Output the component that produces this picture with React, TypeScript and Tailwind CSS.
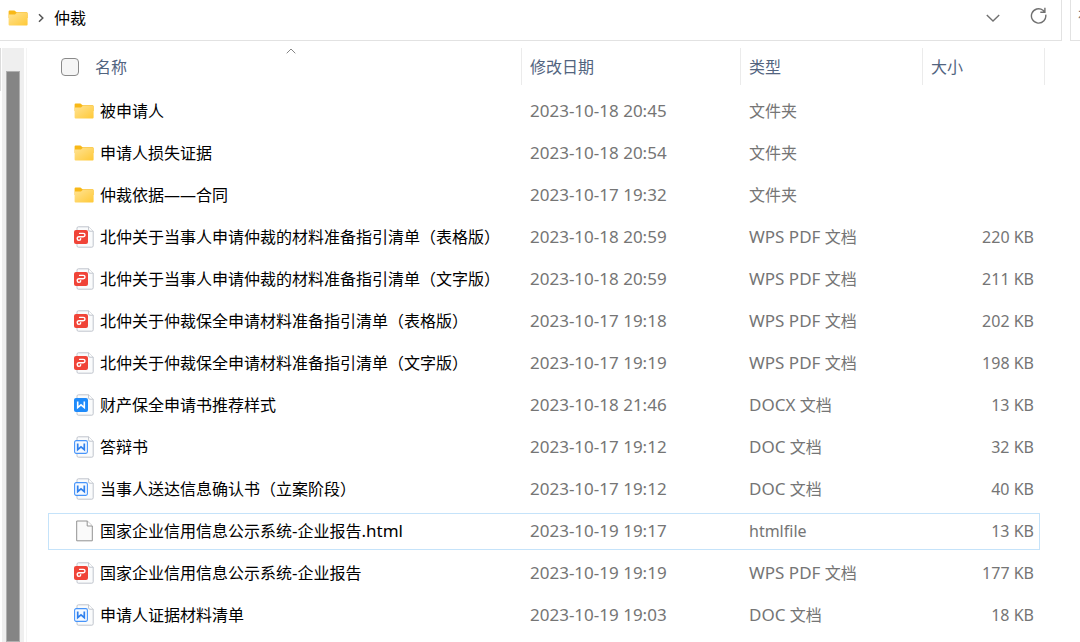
import React from "react";

type Kind = "folder" | "pdf" | "docx" | "doc" | "blank";

interface Entry {
  name: string;
  modified: string;
  type: string;
  size?: string;
  kind: Kind;
  selected?: boolean;
}

const entries: Entry[] = [
  { name: "被申请人", modified: "2023-10-18 20:45", type: "文件夹", kind: "folder" },
  { name: "申请人损失证据", modified: "2023-10-18 20:54", type: "文件夹", kind: "folder" },
  { name: "仲裁依据——合同", modified: "2023-10-17 19:32", type: "文件夹", kind: "folder" },
  { name: "北仲关于当事人申请仲裁的材料准备指引清单（表格版）", modified: "2023-10-18 20:59", type: "WPS PDF 文档", size: "220 KB", kind: "pdf" },
  { name: "北仲关于当事人申请仲裁的材料准备指引清单（文字版）", modified: "2023-10-18 20:59", type: "WPS PDF 文档", size: "211 KB", kind: "pdf" },
  { name: "北仲关于仲裁保全申请材料准备指引清单（表格版）", modified: "2023-10-17 19:18", type: "WPS PDF 文档", size: "202 KB", kind: "pdf" },
  { name: "北仲关于仲裁保全申请材料准备指引清单（文字版）", modified: "2023-10-17 19:19", type: "WPS PDF 文档", size: "198 KB", kind: "pdf" },
  { name: "财产保全申请书推荐样式", modified: "2023-10-18 21:46", type: "DOCX 文档", size: "13 KB", kind: "docx" },
  { name: "答辩书", modified: "2023-10-17 19:12", type: "DOC 文档", size: "32 KB", kind: "doc" },
  { name: "当事人送达信息确认书（立案阶段）", modified: "2023-10-17 19:12", type: "DOC 文档", size: "40 KB", kind: "doc" },
  { name: "国家企业信用信息公示系统-企业报告.html", modified: "2023-10-19 19:17", type: "htmlfile", size: "13 KB", kind: "blank", selected: true },
  { name: "国家企业信用信息公示系统-企业报告", modified: "2023-10-19 19:19", type: "WPS PDF 文档", size: "177 KB", kind: "pdf" },
  { name: "申请人证据材料清单", modified: "2023-10-19 19:03", type: "DOC 文档", size: "18 KB", kind: "doc" },
];

function FolderIcon() {
  return (
    <svg width="20" height="16" viewBox="0 0 20 16" aria-hidden="true" className="shrink-0">
      <defs>
        <linearGradient id="folder" x1="0" y1="0" x2="1" y2="1">
          <stop offset="0" stopColor="#ffe394" />
          <stop offset="1" stopColor="#ffc937" />
        </linearGradient>
      </defs>
      <path d="M.6 1.4Q.6.4 1.6.4H6.4L8.6 2.2H18.6Q19.6 2.2 19.6 3.2V8H.6Z" fill="#f8b817" />
      <path d="M.6 4.6H7L8.8 2.7H18.6Q19.6 2.7 19.6 3.7V14.4Q19.6 15.4 18.6 15.4H1.6Q.6 15.4.6 14.4Z" fill="url(#folder)" />
    </svg>
  );
}

function FileIcon({ kind }: { kind: Kind }) {
  if (kind === "folder") return <FolderIcon />;
  if (kind === "blank") {
    return (
      <svg width="20" height="22" viewBox="0 0 20 22" aria-hidden="true" className="shrink-0">
        <path d="M2.7 1H13.2L18.3 6V20.8H2.7Z" fill="#fafafa" stroke="#929292" />
        <path d="M13.2 1V6H18.3" fill="#fff" stroke="#929292" />
      </svg>
    );
  }
  return (
    <svg width="20" height="22" viewBox="0 0 20 22" aria-hidden="true" className="shrink-0">
      <path d="M4.4.8H14.6L19.2 5.2V19.8Q19.2 21.2 17.8 21.2H4.4Q3 21.2 3 19.8V2.2Q3 .8 4.4.8Z" fill="#fafbfc" stroke="#bfc4cc" />
      <path d="M14.6.8V3.9Q14.6 5.2 15.9 5.2H19.2" fill="#fff" stroke="#bfc4cc" />
      {kind === "pdf" && (
        <>
          <rect x="0" y="4" width="14" height="14" rx="2" fill="#f04438" />
          <path d="M5.6 7.4H9.2Q11 7.4 11 9.1Q11 10.8 9.2 10.8H5Q3.2 10.8 3.2 12.6Q3.2 14.4 4.9 14.4Q6.7 14.4 6.7 12.7" fill="none" stroke="#fff" strokeWidth="1.4" strokeLinecap="round" />
        </>
      )}
      {kind === "docx" && (
        <>
          <rect x="0" y="4" width="14" height="14" rx="2" fill="#1f8bfa" />
          <path d="M3.7 7.6V13.6L7 10.8L10.3 13.6V7.6" fill="none" stroke="#fff" strokeWidth="1.6" />
        </>
      )}
      {kind === "doc" && (
        <>
          <rect x=".6" y="4.6" width="12.8" height="12.8" rx="1.6" fill="#f6faff" stroke="#4795fa" strokeWidth="1.1" />
          <path d="M3.7 7.6V13.6L7 10.8L10.3 13.6V7.6" fill="none" stroke="#2f80ed" strokeWidth="1.7" />
        </>
      )}
    </svg>
  );
}

/** Sets capitals and figures one pixel larger than the Chinese text around them. */
function MixedText({ text }: { text: string }) {
  const runs = text.match(/[\x20-\x7e]+|[^\x20-\x7e]+/g) ?? [];
  return (
    <span className="whitespace-pre">
      {runs.map((run, i) => (
        <span key={i} className={/^[\x20-\x7e]/.test(run) ? "text-[17px]" : "text-[16px]"}>
          {run}
        </span>
      ))}
    </span>
  );
}

const boxClass = "flex h-[37px] items-center";

function Row({ entry }: { entry: Entry }) {
  const edge = entry.selected ? "border-[#c5e3fa]" : "border-transparent";
  return (
    <tr className="h-[42px] text-[#757575]" aria-selected={entry.selected}>
      <td className="p-0">
        <div className={`${boxClass} gap-[6px] border-y border-l pl-[25px] text-black ${edge}`}>
          <FileIcon kind={entry.kind} />
          <MixedText text={entry.name} />
        </div>
      </td>
      <td className="p-0">
        <div className={`${boxClass} border-y pl-2 ${edge}`}>
          <MixedText text={entry.modified} />
        </div>
      </td>
      <td className="p-0">
        <div className={`${boxClass} border-y pl-2 ${edge}`}>
          {entry.type === "htmlfile" ? entry.type : <MixedText text={entry.type} />}
        </div>
      </td>
      <td className="p-0">
        <div className={`${boxClass} justify-end border-y border-r pr-[5px] ${edge}`}>{entry.size}</div>
      </td>
      <td className="p-0" />
    </tr>
  );
}

function AddressBar() {
  return (
    <header className="flex h-[41px] shrink-0 gap-2 overflow-hidden">
      <div className="flex flex-1 items-center border-r border-b border-[#e2e2e2] pb-[5px] pl-2">
        <FolderIcon />
        <svg width="8" height="10" viewBox="0 0 8 10" aria-hidden="true" className="mt-px ml-[9px]">
          <path d="M2 1.2L5.8 5L2 8.8" fill="none" stroke="#555" strokeWidth="1.5" />
        </svg>
        <a href="#" className="ml-[9px] text-[16px] text-black">仲裁</a>
        <button type="button" aria-label="展开" className="mr-[30px] ml-auto">
          <svg width="14" height="8" viewBox="0 0 14 8" className="block">
            <path d="M.8 1L7 7L13.2 1" fill="none" stroke="#707070" strokeWidth="1.4" />
          </svg>
        </button>
        <button type="button" aria-label="刷新" className="mr-[14px] mb-[3px]">
          <svg width="17" height="18" viewBox="0 0 17 18" className="block">
            <path d="M15.7 7.6A7.2 7.2 0 1 1 13 3.2L14.6 4.8M14.9.8V5.3H10.3" fill="none" stroke="#707070" strokeWidth="1.4" />
          </svg>
        </button>
      </div>
      <div className="w-[10px] overflow-hidden border-b border-l border-[#e2e2e2]">
        <input aria-label="搜索" placeholder="在" className="h-[32px] w-[40px] pl-[7px] text-[16px] outline-none placeholder:text-[#757575]" />
      </div>
    </header>
  );
}

export default function App() {
  return (
    <div className="flex min-h-screen flex-col overflow-hidden bg-white font-['Noto_Sans','Noto_Sans_CJK_SC',sans-serif] text-[16px] leading-6">
      <AddressBar />
      <div className="flex flex-1 pt-[7px]">
        <div className="h-[43px] w-px bg-[#dcdcdc]" />
        <div className="ml-px flex w-[22px] flex-col bg-[#efefef] px-1 pt-[23px]">
          <div className="flex-1 bg-[#858585] outline outline-[#b0b0b0] -outline-offset-1" />
        </div>
        <div className="ml-[2px] w-px bg-[#f4f4f4]" />
        <main className="flex-1 pr-[35px] pl-[21px]">
          <table className="w-full table-fixed border-separate border-spacing-0">
            <colgroup>
              <col />
              <col className="w-[219px]" />
              <col className="w-[182px]" />
              <col className="w-[117px]" />
              <col className="w-[5px]" />
            </colgroup>
            <thead>
              <tr className="h-[42px] text-left align-top text-[#52647f]">
                <th className="relative p-0 font-normal">
                  <div className={`${boxClass} border-r border-[#ebebeb] pl-[13px]`}>
                    <input type="checkbox" aria-label="全选" className="size-[18px] appearance-none rounded-[4px] border border-[#8a8a8a] bg-[#f5f5f5]" />
                    <span className="ml-4">名称</span>
                  </div>
                  <svg width="10" height="6" viewBox="0 0 10 6" aria-hidden="true" className="absolute top-0 left-[238px]">
                    <path d="M.7 5.3L5 1L9.3 5.3" fill="none" stroke="#858585" />
                  </svg>
                </th>
                <th className="p-0 font-normal">
                  <div className={`${boxClass} border-r border-[#ebebeb] pl-2`}>修改日期</div>
                </th>
                <th className="p-0 font-normal">
                  <div className={`${boxClass} border-r border-[#ebebeb] pl-2`}>类型</div>
                </th>
                <th className="p-0 font-normal">
                  <div className={`${boxClass} pl-2`}>大小</div>
                </th>
                <td className="p-0">
                  <div className={`${boxClass} border-r border-[#ebebeb]`} />
                </td>
              </tr>
            </thead>
            <tbody>
              {entries.map((entry) => (
                <Row key={entry.name} entry={entry} />
              ))}
            </tbody>
          </table>
        </main>
      </div>
    </div>
  );
}
